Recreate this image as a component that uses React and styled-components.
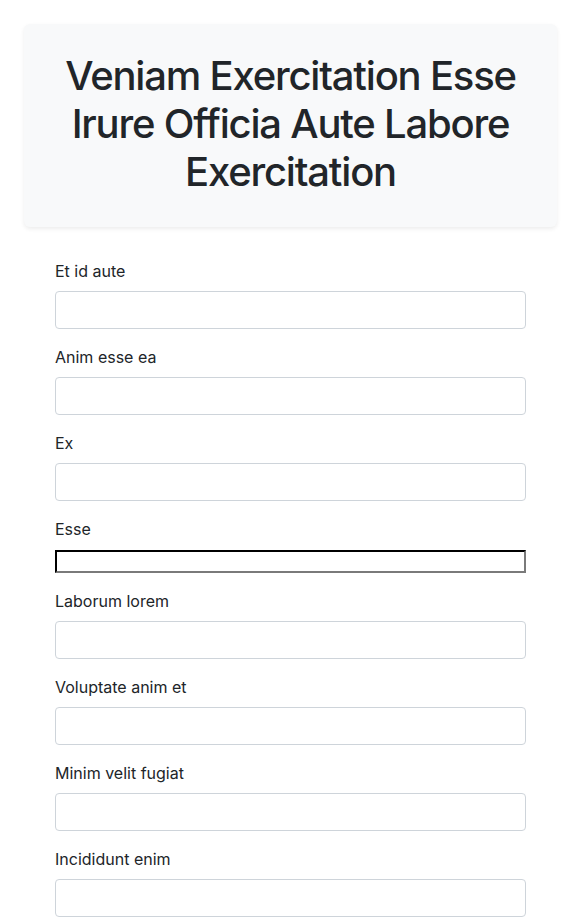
import styled, { createGlobalStyle } from 'styled-components';

const GlobalStyle = createGlobalStyle`
  * {
    box-sizing: border-box;
  }

  body {
    margin: 0;
    background: #fff;
    color: #212529;
    font-family: Inter, "Noto Sans", "Liberation Sans", sans-serif;
    font-size: 16px;
    line-height: 1.5;
  }
`;

const Page = styled.div`
  padding: 24px 24px 0;
`;

const Header = styled.header`
  background-color: #f8f9fa;
  border-radius: 6px;
  box-shadow: 0 2px 4px rgba(0, 0, 0, 0.075);
  padding: 28px 20px 31px;
  text-align: center;
`;

const Title = styled.h1`
  margin: 0;
  font-size: 40px;
  font-weight: 500;
  line-height: 1.2;
  letter-spacing: -1.2px;
  color: #212529;
`;

const Form = styled.form`
  padding: 32px 31px 0;
`;

const Field = styled.div`
  margin-bottom: 16px;
`;

const Label = styled.label`
  display: block;
  margin-bottom: 8px;
  font-size: 16px;
  line-height: 24px;
  color: #212529;
`;

const Input = styled.input`
  display: block;
  width: 100%;
  height: 38px;
  padding: 6px 12px;
  font: inherit;
  color: #212529;
  background: #fff;
  border: 1px solid #ced4da;
  border-radius: 4px;
`;

const PlainInput = styled.input`
  display: block;
  width: 100%;
  height: 23px;
  margin-top: 9px;
  padding: 1px 2px;
  border: 2px inset #767676;
  border-top-color: #1f1f1f;
  border-left-color: #1f1f1f;
  border-bottom-color: #7a7a7a;
  border-right-color: #7a7a7a;
  background: #fff;
`;

const fields = [
  { label: 'Et id aute' },
  { label: 'Anim esse ea' },
  { label: 'Ex' },
  { label: 'Esse', plain: true },
  { label: 'Laborum lorem' },
  { label: 'Voluptate anim et' },
  { label: 'Minim velit fugiat' },
  { label: 'Incididunt enim' },
];

export default function App() {
  return (
    <>
      <GlobalStyle />
      <Page>
        <Header>
          <Title>Veniam Exercitation Esse Irure Officia Aute Labore Exercitation</Title>
        </Header>
        <Form>
          {fields.map((f, i) => (
            <Field key={i}>
              <Label htmlFor={`f${i}`}>{f.label}</Label>
              {f.plain ? <PlainInput id={`f${i}`} /> : <Input id={`f${i}`} />}
            </Field>
          ))}
        </Form>
      </Page>
    </>
  );
}
